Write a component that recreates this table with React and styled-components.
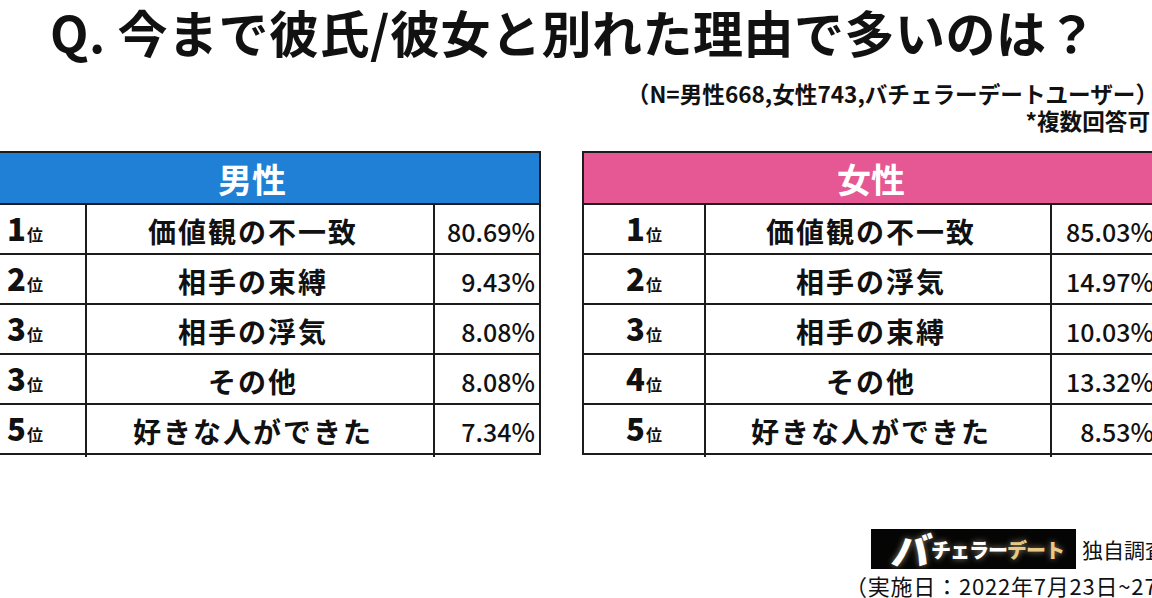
import React from 'react'
import styled, { createGlobalStyle } from 'styled-components'

const GlobalStyle = createGlobalStyle`
  html, body {
    margin: 0;
    padding: 0;
    background: #ffffff;
  }
  body {
    font-family: "Noto Sans CJK JP", "Noto Sans", sans-serif;
    color: #111111;
  }
`

const Stage = styled.div`
  width: 1152px;
  height: 598px;
  overflow: hidden;
  background: #ffffff;
`

const Board = styled.div`
  width: 1240px;
  margin-left: -37px;
  display: flex;
  flex-direction: column;
`

const Title = styled.h1`
  margin: 0;
  padding-left: 87px;
  font-size: 50px;
  line-height: 62px;
  letter-spacing: 0.5px;
  font-weight: 700;
  white-space: nowrap;
`

const Note = styled.div`
  margin-top: 18px;
  display: flex;
  flex-direction: column;
  align-items: flex-end;
  padding-right: 45px;
  font-size: 22.6px;
  line-height: 27px;
  font-weight: 700;
  white-space: nowrap;
`

const NoteLine = styled.span`
  padding-right: ${p => p.$inset || 0}px;
`

const Tables = styled.div`
  margin-top: 17px;
  display: flex;
  gap: 41px;
`

const Table = styled.div`
  width: 578px;
  border: 2px solid #1c1c1c;
  box-sizing: border-box;
  display: flex;
  flex-direction: column;
`

const Head = styled.div`
  height: 50px;
  background: ${p => p.$color};
  color: #ffffff;
  display: flex;
  align-items: center;
  justify-content: center;
  font-size: 34px;
  font-weight: 700;
`

const Row = styled.div`
  height: 48px;
  border-top: 2px solid #1c1c1c;
  display: grid;
  grid-template-columns: 120px 1fr ${p => p.$pct}px;
`

const Rank = styled.div`
  display: flex;
  align-items: baseline;
  justify-content: center;
  font-weight: 900;
  font-size: 31px;
  line-height: 46px;

  small {
    font-size: 16px;
    font-weight: 700;
    margin-left: 1px;
  }
`

const Item = styled.div`
  border-left: 2px solid #1c1c1c;
  display: flex;
  align-items: center;
  justify-content: center;
  font-size: 28px;
  letter-spacing: 2px;
  font-weight: 700;
  padding-right: 14px;
`

const Pct = styled.div`
  border-left: 2px solid #1c1c1c;
  display: flex;
  align-items: center;
  justify-content: flex-end;
  padding-right: 4px;
  font-size: 25px;
  font-weight: 500;
`

const Footer = styled.div`
  margin-top: 74px;
  align-self: flex-end;
  display: flex;
  flex-direction: column;
  align-items: flex-start;
`

const LogoRow = styled.div`
  margin-left: 26px;
  display: flex;
  align-items: center;
  gap: 6px;
  font-size: 21px;
`

const Logo = styled.div`
  width: 205px;
  height: 40px;
  background: #050505;
  display: flex;
  align-items: center;
  padding-left: 22px;
  box-sizing: border-box;
  font-weight: 900;
  white-space: nowrap;
  text-shadow: 0 0 6px rgba(255, 240, 200, 0.55);
`

const LogoBig = styled.span`
  color: #ffffff;
  font-size: 38px;
  line-height: 40px;
  display: inline-block;
  transform: skewX(-10deg);
`

const LogoText = styled.span`
  color: ${p => p.$color};
  font-size: 20px;
  letter-spacing: -1px;
`

const DateLine = styled.div`
  margin-top: 3px;
  font-size: 22px;
  letter-spacing: 0.8px;
  line-height: 27px;
  white-space: nowrap;
`

const men = [
  ['1', '価値観の不一致', '80.69%'],
  ['2', '相手の束縛', '9.43%'],
  ['3', '相手の浮気', '8.08%'],
  ['3', 'その他', '8.08%'],
  ['5', '好きな人ができた', '7.34%']
]

const women = [
  ['1', '価値観の不一致', '85.03%'],
  ['2', '相手の浮気', '14.97%'],
  ['3', '相手の束縛', '10.03%'],
  ['4', 'その他', '13.32%'],
  ['5', '好きな人ができた', '8.53%']
]

const Ranking = ({ label, color, rows, pct }) => (
  <Table>
    <Head $color={color}>{label}</Head>
    {rows.map(([rank, item, value], i) => (
      <Row key={i} $pct={pct}>
        <Rank>{rank}<small>位</small></Rank>
        <Item>{item}</Item>
        <Pct>{value}</Pct>
      </Row>
    ))}
  </Table>
)

export default function App () {
  return (
    <Stage>
      <GlobalStyle />
      <Board>
        <Title>Q. 今まで彼氏/彼女と別れた理由で多いのは？</Title>
        <Note>
          <NoteLine>（N=男性668,女性743,バチェラーデートユーザー）</NoteLine>
          <NoteLine $inset={8}>*複数回答可</NoteLine>
        </Note>
        <Tables>
          <Ranking label='男性' color='#1f80d5' rows={men} pct={106} />
          <Ranking label='女性' color='#e65893' rows={women} pct={108} />
        </Tables>
        <Footer>
          <LogoRow>
            <Logo>
              <LogoBig>バ</LogoBig>
              <LogoText $color='#ffffff'>チェラー</LogoText>
              <LogoText $color='#e9c983'>デート</LogoText>
            </Logo>
            独自調査
          </LogoRow>
          <DateLine>（実施日：2022年7月23日~27日）</DateLine>
        </Footer>
      </Board>
    </Stage>
  )
}
